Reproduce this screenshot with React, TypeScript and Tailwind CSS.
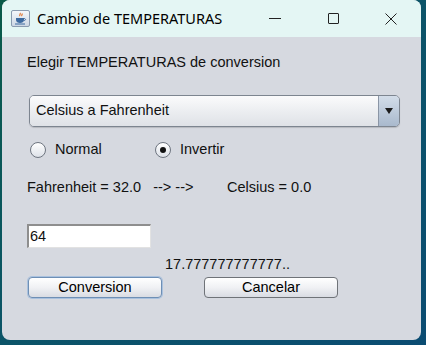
import React from "react";

const JavaIcon = () => (
  <div className="w-[19px] h-[17px] rounded-[2px] border border-[#8a9bb0] bg-gradient-to-b from-[#f4f7fb] to-[#cdd7e4] flex items-center justify-center">
    <svg width="13" height="13" viewBox="0 0 13 13">
      <path d="M6 1c1 1 -1 2 0 3M8 1.5c.8 1 -1 1.5 0 2.5" stroke="#e0702a" strokeWidth="1.2" fill="none" />
      <path d="M2 6h8v2c0 2-2 3-4 3s-4-1-4-3z" fill="#3d6aa0" />
      <path d="M10 6.5c2 0 2 2 0 2" stroke="#3d6aa0" strokeWidth="1" fill="none" />
      <path d="M1 12h10" stroke="#3d6aa0" strokeWidth="1" />
    </svg>
  </div>
);

const Radio = ({ checked, label }: { checked?: boolean; label: string }) => (
  <div className="flex items-center gap-[9px]">
    <div className="w-[16px] h-[16px] rounded-full border border-[#6e7580] bg-gradient-to-b from-[#ffffff] to-[#dde1e8] flex items-center justify-center">
      {checked && <div className="w-[6px] h-[6px] rounded-full bg-[#111]" />}
    </div>
    <span>{label}</span>
  </div>
);

const Btn = ({ label, focused }: { label: string; focused?: boolean }) => (
  <div
    className={
      "w-[134px] h-[21px] rounded-[4px] border flex items-center justify-center bg-gradient-to-b from-[#ffffff] via-[#f0f1f4] to-[#d9dce3] " +
      (focused
        ? "border-[#6e8fb5] shadow-[0_0_0_1px_#a9c1de]"
        : "border-[#6f7378]")
    }
  >
    <span className="text-black leading-none">{label}</span>
  </div>
);

export default function App() {
  return (
    <div className="w-[426px] h-[345px] bg-gradient-to-br from-[#0a5a48] via-[#0c5468] to-[#0b4c72] font-['Liberation_Sans',Arial,sans-serif] text-[14.5px] text-[#111]">
      <div className="ml-[2px] w-[419px] h-[340px] rounded-[8px] overflow-hidden bg-[#d6d9e0] flex flex-col">
        <div className="h-[37px] bg-[#e4f6f4] flex items-center pl-[9px]">
          <JavaIcon />
          <span className="ml-[7px] text-[14.5px] font-['Noto_Sans',sans-serif] text-black">Cambio de TEMPERATURAS</span>
          <div className="ml-auto flex items-center h-full pr-[1px]">
            <div className="w-[58px] flex justify-center">
              <div className="w-[12px] h-px bg-[#222]" />
            </div>
            <div className="w-[58px] flex justify-center">
              <div className="w-[11px] h-[11px] border border-[#222] rounded-[1px]" />
            </div>
            <div className="w-[58px] flex justify-center">
              <svg width="12" height="12" viewBox="0 0 12 12">
                <path d="M0.5 0.5L11.5 11.5M11.5 0.5L0.5 11.5" stroke="#222" strokeWidth="1" />
              </svg>
            </div>
          </div>
        </div>

        <div className="pl-[25px] pr-[20px] flex flex-col">
          <div className="mt-[17px] h-[16px] leading-[16px]">Elegir TEMPERATURAS de conversion</div>

          <div className="mt-[25px] ml-[2px] w-[371px] h-[32px] rounded-[5px] border border-[#7d8590] flex overflow-hidden shadow-[0_1px_1px_rgba(0,0,0,0.15)]">
            <div className="flex-1 flex items-center pl-[6px] bg-gradient-to-b from-[#fbfbfc] via-[#eceef1] to-[#dfe2e7]">
              Celsius a Fahrenheit
            </div>
            <div className="w-[21px] border-l border-[#8a95a5] bg-gradient-to-b from-[#d3dde9] to-[#a9b9cd] flex items-center justify-center">
              <svg width="8" height="6" viewBox="0 0 8 6">
                <path d="M0 0h8L4 6z" fill="#1c1c1c" />
              </svg>
            </div>
          </div>

          <div className="mt-[14px] ml-[3px] h-[18px] flex items-center">
            <div className="w-[125px]">
              <Radio label="Normal" />
            </div>
            <Radio checked label="Invertir" />
          </div>

          <div className="mt-[21px] h-[16px] flex items-center">
            <span className="w-[200px] whitespace-pre">Fahrenheit = 32.0   --&gt; --&gt;</span>
            <span>Celsius = 0.0</span>
          </div>

          <div className="mt-[28px] w-[124px] h-[24px] bg-white border border-[#8e8e8e] border-b-[#e2e2e2] border-r-[#e2e2e2] border-t-2 border-l-2 flex items-center pl-[1px]">
            64
          </div>

          <div className="mt-[8px] ml-[138px] h-[16px] leading-[16px]">17.777777777777..</div>

          <div className="mt-[5px] ml-[1px] flex gap-[42px]">
            <Btn label="Conversion" focused />
            <Btn label="Cancelar" />
          </div>
        </div>
      </div>
    </div>
  );
}
